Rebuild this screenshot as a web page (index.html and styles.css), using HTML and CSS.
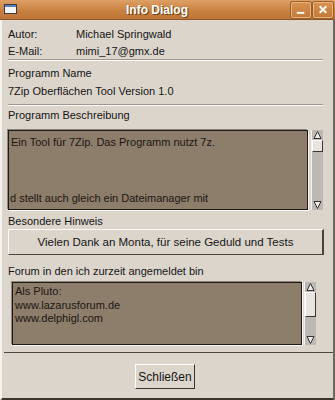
FILE: index.html
```html
<!DOCTYPE html>
<html lang="de">
  <head>
    <meta charset="UTF-8" />
    <meta name="viewport" content="width=device-width, initial-scale=1.0" />
    <title>Info Dialog</title>
    <link rel="stylesheet" href="styles.css">
  </head>
  <body>
    <div class="window">
      <div class="titlebar">
        <svg class="appicon" width="13" height="10" viewBox="0 0 13 10">
          <rect x="0.5" y="0.5" width="12" height="9" fill="#f4f4f4" stroke="#3b3b3b" />
          <rect x="1" y="1" width="11" height="2" fill="#5b7fc0" />
        </svg>
        <span class="title">Info Dialog</span>
        <div class="tbtns">
          <span class="tbtn">
            <svg width="19" height="16" viewBox="0 0 19 16"><rect x="5" y="10" width="8" height="2" fill="#fff" /></svg>
          </span>
          <span class="tbtn">
            <svg width="19" height="16" viewBox="0 0 19 16"><path d="M6 4 L13 11 M13 4 L6 11" stroke="#fff" stroke-width="2" /></svg>
          </span>
        </div>
      </div>
      <div class="frame">
        <div class="client">
          <div class="field"><span class="key">Autor:</span><span>Michael Springwald</span></div>
          <div class="field"><span class="key">E-Mail:</span><span>mimi_17@gmx.de</span></div>
          <hr class="sep" />
          <div class="row first">Programm Name</div>
          <div class="row">7Zip Oberflächen Tool Version 1.0</div>
          <hr class="sep gap" />
          <div class="row">Programm Beschreibung</div>
          <div class="memobox desc">
            <div class="memo">
              <div>Ein Tool für 7Zip. Das Programm nutzt 7z.</div>
              <div>&nbsp;</div>
              <div>&nbsp;</div>
              <div>&nbsp;</div>
              <div class="flush">d stellt auch gleich ein Dateimanager mit</div>
            </div>
            <div class="sb">
              <div class="sb-arrow">
                <svg width="11" height="10" viewBox="0 0 11 10"><path d="M2 8.5 L5.5 1.5 L9 8.5 Z" fill="#ecebe8" stroke="#333" /></svg>
              </div>
              <div class="sb-thumb small"></div>
              <div class="sb-fill"></div>
              <div class="sb-arrow">
                <svg width="11" height="10" viewBox="0 0 11 10"><path d="M2 1.5 L5.5 8.5 L9 1.5 Z" fill="#ecebe8" stroke="#333" /></svg>
              </div>
            </div>
          </div>
          <div class="row short hint">Besondere Hinweis</div>
          <div class="panel">Vielen Dank an Monta, für seine Geduld und Tests</div>
          <div class="row short forum">Forum in den ich zurzeit angemeldet bin</div>
          <div class="memobox links">
            <div class="memo">
              <div>Als Pluto:</div>
              <div>www.lazarusforum.de</div>
              <div>www.delphigl.com</div>
            </div>
            <div class="sb">
              <div class="sb-arrow">
                <svg width="11" height="10" viewBox="0 0 11 10"><path d="M2 8.5 L5.5 1.5 L9 8.5 Z" fill="#ecebe8" stroke="#333" /></svg>
              </div>
              <div class="sb-thumb big"></div>
              <div class="sb-fill"></div>
              <div class="sb-arrow">
                <svg width="11" height="10" viewBox="0 0 11 10"><path d="M2 1.5 L5.5 8.5 L9 1.5 Z" fill="#ecebe8" stroke="#333" /></svg>
              </div>
            </div>
          </div>
        </div>
        <div class="footer">
          <button class="btn">Schließen</button>
        </div>
      </div>
    </div>
  </body>
</html>
```

FILE: styles.css
```css
body {
  margin: 0;
}
.window {
  width: 335px;
  height: 400px;
  display: flex;
  flex-direction: column;
  background: #dcd5cc;
  font: 11px "Liberation Sans", Arial, sans-serif;
  color: #151515;
}
.titlebar {
  box-sizing: border-box;
  height: 20px;
  display: flex;
  align-items: center;
  background: linear-gradient(#dea066, #c67f3e 60%, #bd7638);
  border-bottom: 1px solid #8c5627;
}
.appicon {
  margin-left: 4px;
  margin-top: -1px;
}
.title {
  flex: 1;
  text-align: center;
  padding-left: 6px;
  font-weight: bold;
  font-size: 12px;
  color: #fff;
  text-shadow: 1px 1px 0 #6e4016;
}
.tbtns {
  display: flex;
  gap: 2px;
  margin-right: 2px;
}
.tbtn {
  box-sizing: border-box;
  width: 20px;
  height: 16px;
  display: flex;
  border: 1px solid #eab47e;
  border-radius: 2px;
  background: linear-gradient(#d89050, #c27a3a);
  box-shadow: 0 0 0 1px #9a5e2c;
}
.tbtn svg {
  margin: -1px 0 0 0;
}
.frame {
  flex: 1;
  display: flex;
  flex-direction: column;
  border-left: 2px solid #f6f3ef;
  border-right: 2px solid #6f6860;
  border-bottom: 2px solid #3d352c;
  border-bottom-left-radius: 3px;
}
.client {
  padding: 5px 9px 0 6px;
}
.field {
  display: flex;
  height: 17px;
  align-items: center;
}
.key {
  width: 68px;
}
.sep {
  margin: 0 1px 0 0;
  height: 0;
  border: 0;
  border-top: 1px solid #9d978f;
  border-bottom: 1px solid #fbf9f7;
}
.sep.gap {
  margin-top: 4px;
}
.row {
  line-height: 18px;
}
.row.first {
  margin-top: 3px;
}
.row.short {
  line-height: 16px;
}
.hint {
  margin-top: 3px;
}
.forum {
  margin-top: 8px;
}
.memobox {
  display: flex;
}
.memobox.desc {
  margin-top: 6px;
  margin-right: 1px;
  height: 80px;
  gap: 4px;
}
.memobox.links {
  margin: 3px 8px 0 4px;
  height: 63px;
  gap: 3px;
}
.memo {
  flex: 1;
  overflow: hidden;
  background: #8d7d6b;
  border: 1px solid #1e1a16;
  box-shadow: -1px -1px 0 #8e8880, 1px 1px 0 #fbfaf8;
  color: #1c1712;
  padding: 4px 2px 0 2px;
  line-height: 14px;
}
.links .memo {
  padding-top: 2px;
  line-height: 13.5px;
}
.memo .flush {
  margin-left: -1px;
}
.sb {
  width: 11px;
  display: flex;
  flex-direction: column;
  background: #bcb8b3;
  box-shadow: -1px 0 0 #f4f1ee;
}
.sb-arrow {
  height: 10px;
  display: flex;
}
.sb-thumb {
  box-sizing: border-box;
  background: #e8e4df;
  border-top: 1px solid #fff;
  border-left: 1px solid #fff;
  border-right: 1px solid #3a3631;
  border-bottom: 1px solid #3a3631;
}
.sb-thumb.small {
  height: 12px;
}
.sb-thumb.big {
  height: 25px;
}
.sb-fill {
  flex: 1;
}
.panel {
  box-sizing: border-box;
  height: 26px;
  display: flex;
  align-items: center;
  justify-content: center;
  font-size: 11.5px;
  border-top: 1px solid #fbf9f7;
  border-left: 1px solid #fbf9f7;
  border-right: 2px solid #4a443e;
  border-bottom: 1px solid #4a443e;
}
.footer {
  margin-top: 7px;
  margin-left: 2px;
  border-top: 1px solid #4f4942;
  display: flex;
  justify-content: center;
  padding: 11px 7px 0 0;
}
.btn {
  box-sizing: border-box;
  width: 60px;
  height: 25px;
  padding: 0;
  font: 12px "Liberation Sans", Arial, sans-serif;
  color: #151515;
  background: #dcd5cc;
  border-top: 1px solid #fff;
  border-left: 1px solid #fff;
  border-right: 1px solid #3a3530;
  border-bottom: 1px solid #3a3530;
}
```
